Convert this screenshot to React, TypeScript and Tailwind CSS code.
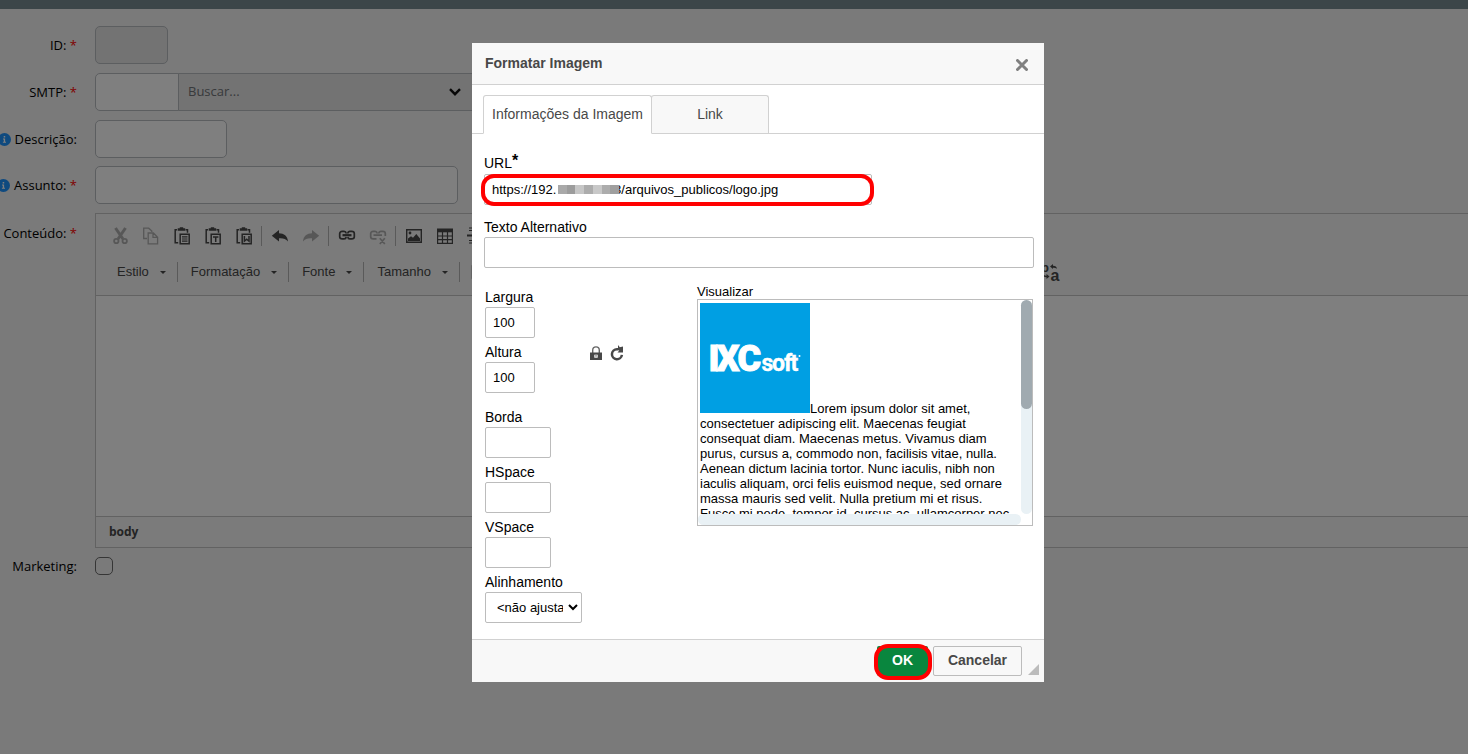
import React from "react";

const sans = "font-['Liberation_Sans',Arial,sans-serif]";
const box = "h-[31px] rounded-xs border border-[#bcbcbc] bg-white pl-[7px] text-[13px] text-black outline-none";

function InfoIcon() {
  return (
    <svg className="size-[13px] shrink-0" viewBox="0 0 13 13" aria-hidden="true">
      <circle cx="6.5" cy="6.5" r="6.5" fill="#1f94ff" />
      <path d="M5 5.4h2.1v3.3h.9v1.100H4.900V8.700h.9V6.400H5zM5.700 3h1.500v1.500H5.700z" fill="#fff" />
    </svg>
  );
}

function RowLabel({ text, htmlFor, required, info }: { text: string; htmlFor: string; required?: boolean; info?: boolean }) {
  return (
    <label htmlFor={htmlFor} className="flex w-[77px] shrink-0 items-center justify-end gap-1 text-[13px] leading-[18px] whitespace-nowrap text-black">
      {info && <InfoIcon />}
      <span>
        {text}
        {required && <span className="text-[#ff0000]"> *</span>}
      </span>
    </label>
  );
}

function ToolButton({ label, disabled, children }: { label: string; disabled?: boolean; children: React.ReactNode }) {
  return (
    <button type="button" aria-label={label} disabled={disabled} className="flex h-[30px] w-[31px] shrink-0 items-center justify-center text-[#484848] disabled:opacity-40">
      <svg className="size-[18px]" viewBox="0 0 18 18" fill="none" stroke="currentColor" strokeWidth="1.5">
        {children}
      </svg>
    </button>
  );
}

function Sep() {
  return <span className="mx-0.5 h-5 w-px shrink-0 bg-[#b4b4b4]" />;
}

function Combo({ label }: { label: string }) {
  return (
    <button type="button" className="flex h-[30px] shrink-0 items-center gap-[11px] pr-[9px] pl-[11px] text-[13px] text-[#484848]">
      {label}
      <svg className="h-[3px] w-[6px]" viewBox="0 0 6 3" aria-hidden="true">
        <path d="M0 0h6L3 3z" fill="currentColor" />
      </svg>
    </button>
  );
}

const clipboard = (
  <>
    <path d="M4 2.7H2.2v13h3M12.5 2.7h2v3" />
    <path d="M4.7 1.2h2.1V.3h3.4v.9h2v2.6H4.7z" fill="currentColor" stroke="none" />
    <path d="M7.2 7.2h9v9.6h-9z" />
  </>
);

function Editor() {
  return (
    <div className={`min-w-0 flex-1 overflow-hidden border border-r-0 border-[#c4c4c4] bg-white ${sans}`}>
      <div className="border-b border-[#c4c4c4] bg-[#f6f6f6] px-2 pt-[7px] pb-2">
        <div className="flex items-center">
          <ToolButton label="Recortar" disabled>
            <path d="M4.500 1 12 12M14.500 1 7 12" strokeWidth="3" />
            <circle cx="5.300" cy="14" r="2.200" strokeWidth="1.800" />
            <circle cx="13.700" cy="14" r="2.200" strokeWidth="1.800" />
          </ToolButton>
          <ToolButton label="Copiar" disabled>
            <path d="M5 11.500H1.700V1.200h5L9.800 4v1M6.200 6h5.200l4.200 4.200v6.600H6.200zM11 6v4.400h4.600" strokeWidth="1.300" />
          </ToolButton>
          <ToolButton label="Colar">
            {clipboard}
            <path d="M9 9.800h5.500M9 12h5.500M9 14.200h5.500" strokeWidth="1.200" />
          </ToolButton>
          <ToolButton label="Colar como texto">
            {clipboard}
            <path d="M9 10h5.400M11.700 10v5" />
          </ToolButton>
          <ToolButton label="Colar do Word">
            {clipboard}
            <path d="M9.400 9v5.200l2.300-2 2.300 2V9" />
          </ToolButton>
          <Sep />
          <ToolButton label="Desfazer">
            <path d="M.8 8.700 8 3v3.200c5 .2 8.500 2.500 9 8.200-2.200-3-5-3.400-9-3.200v3.300z" fill="currentColor" stroke="none" />
          </ToolButton>
          <ToolButton label="Refazer" disabled>
            <path d="M17.200 8.700 10 3v3.200c-5 .2-8.500 2.500-9 8.200 2.200-3 5-3.400 9-3.200v3.300z" fill="currentColor" stroke="none" />
          </ToolButton>
          <Sep />
          <ToolButton label="Link">
            <path d="M8.200 6.300C8 5 7.300 4.400 6 4.400H4.300C2.500 4.400 1.700 5.500 1.700 6.500v3.200c0 1.200.8 2.200 2.600 2.200H6c1.300 0 2-.6 2.200-1.900M9.800 6.300c.2-1.300.9-1.900 2.200-1.900h1.700c1.800 0 2.600 1.100 2.600 2.100v3.200c0 1.200-.8 2.200-2.600 2.200H12c-1.300 0-2-.6-2.200-1.900" strokeWidth="1.700" />
            <path d="M4.500 8.200h9" strokeWidth="2.200" />
          </ToolButton>
          <ToolButton label="Remover link" disabled>
            <path d="M8.200 6.300C8 5 7.300 4.400 6 4.400H4.300C2.500 4.400 1.700 5.500 1.700 6.500v3.200c0 1.200.8 2.200 2.600 2.200H7.500M9.800 6.300c.2-1.300.9-1.900 2.200-1.900h1.700c1.800 0 2.600 1.100 2.600 2.100v2.500M4.500 8.200h8.500M10.800 11.300l5 5.700M15.800 11.300l-5 5.700" strokeWidth="1.700" />
          </ToolButton>
          <Sep />
          <ToolButton label="Imagem">
            <path d="M1.700 2.700h14.600v12.600H1.700z" strokeWidth="1.400" />
            <circle cx="5" cy="6" r="1.400" fill="currentColor" stroke="none" />
            <path d="M3 14v-2.500l3-2.200 2 1.500L11.300 7l3.700 4.500V14z" fill="currentColor" stroke="none" />
          </ToolButton>
          <ToolButton label="Tabela">
            <path d="M1 1.500h16v3.800H1z" fill="currentColor" stroke="none" />
            <path d="M1.600 2v14.400h14.800V2M6.500 5v11.500M11.500 5v11.500M1.600 9h14.800M1.600 12.700h14.800" strokeWidth="1.200" />
          </ToolButton>
          <ToolButton label="Linha horizontal">
            <path d="M2 1h14M2 3.500h14M2 13.500h14M2 16h14" strokeWidth="1" />
            <path d="M0 8.500h18" strokeWidth="2" />
          </ToolButton>
        </div>
        <div className="mt-1.5 flex items-center pl-0.5">
          <Combo label="Estilo" />
          <Sep />
          <Combo label="Formatação" />
          <Sep />
          <Combo label="Fonte" />
          <Sep />
          <Combo label="Tamanho" />
          <Sep />
          <div className="flex w-[574px] shrink-0 items-center pl-0.5">
            <ToolButton label="Negrito">
              <path d="M2.500 3h12v12h-12z" />
            </ToolButton>
          </div>
          <button type="button" aria-label="Idioma" className="size-[30px] shrink-0 text-[#484848]">
            <svg className="size-[30px]" viewBox="0 0 30 30" aria-hidden="true">
              <text x="5" y="15" fontSize="13" fontWeight="700" fill="currentColor">b</text>
              <text x="14.500" y="24" fontSize="16" fontWeight="700" fill="currentColor">a</text>
              <path d="M14 9.500 17 7v1.700c2.500 0 3.700 1 4 3-1.300-.8-2.500-1-4-1V12zM13.500 19.500 10.500 17v1.700c-2.300 0-3.400-.8-4-2.700 0 3 1.500 4.300 4 4.300V22z" fill="currentColor" />
            </svg>
          </button>
        </div>
      </div>
      <div className="h-[220px]" />
      <div className="flex h-[31px] items-center border-t border-[#c4c4c4] bg-[#f6f6f6] pb-px pl-[13px] font-['Open_Sans',sans-serif] text-xs font-bold text-[#484848]">
        body
      </div>
    </div>
  );
}

function Background() {
  const field = "h-[38px] border border-[#b8bcc0] bg-white";
  return (
    <main className="min-h-screen bg-[#f4f4f4] font-['Open_Sans','Noto_Sans',sans-serif]">
      <div className="h-[9px] bg-[#788c92]" />
      <form className="pt-[17px]">
        <div className="flex flex-col gap-[9px]">
          <div className="flex items-center gap-[18px]">
            <RowLabel text="ID:" htmlFor="id" required />
            <input id="id" disabled className="h-[38px] w-[73px] rounded-[5px] border border-[#b8bcc0] bg-[#e6e6e6]" />
          </div>
          <div className="flex items-center gap-[18px]">
            <RowLabel text="SMTP:" htmlFor="smtp" required />
            <div className="flex">
              <input id="smtp" className={`${field} w-[84px] rounded-l-[5px]`} />
              <div className="relative -ml-px flex">
                <select aria-label="Buscar" className="h-[38px] w-[300px] appearance-none rounded-r-[5px] border border-[#b8bcc0] bg-[#e6e6e6] pr-8 pl-[9px] text-[13px] text-[#707478]">
                  <option>Buscar...</option>
                </select>
                <svg className="pointer-events-none absolute top-[15px] left-[271px] h-2 w-3" viewBox="0 0 12 8" aria-hidden="true">
                  <path d="M1 1.200l5 5 5-5" fill="none" stroke="#111" strokeWidth="2.400" />
                </svg>
              </div>
            </div>
          </div>
          <div className="flex items-center gap-[18px]">
            <RowLabel text="Descrição:" htmlFor="descricao" info />
            <input id="descricao" className={`${field} w-[132px] rounded-[5px]`} />
          </div>
        </div>
        <div className="flex flex-col gap-[9px] pt-2">
          <div className="flex items-center gap-[18px]">
            <RowLabel text="Assunto:" htmlFor="assunto" required info />
            <input id="assunto" className={`${field} w-[363px] rounded-[5px]`} />
          </div>
          <div className="flex items-start gap-[18px]">
            <div className="pt-[11px]">
              <RowLabel text="Conteúdo:" htmlFor="conteudo" required />
            </div>
            <Editor />
          </div>
          <div className="flex items-center gap-[18px]">
            <RowLabel text="Marketing:" htmlFor="marketing" />
            <input id="marketing" type="checkbox" className="size-[18px] appearance-none rounded-[5px] border border-[#6c6c6c]" />
          </div>
        </div>
      </form>
    </main>
  );
}

function Field({ id, label, value, width }: { id: string; label: string; value?: string; width: string }) {
  return (
    <div className="flex flex-col items-start gap-0.5">
      <label htmlFor={id} className="text-sm leading-4">{label}</label>
      <input id={id} defaultValue={value} className={`${box} ${width}`} />
    </div>
  );
}

function Logo() {
  return (
    <svg className="inline-block size-[110px] align-baseline" viewBox="0 0 110 110" role="img" aria-label="IXCsoft">
      <rect width="110" height="110" fill="#009fe3" />
      <g fill="#fff" stroke="#fff" fontFamily="Roboto, sans-serif">
        <text x="8.500 16.500 37.500" y="67.500" fontSize="36" strokeWidth="1" fontWeight="900">IXC</text>
        <text x="61.500 72 84 90.500" y="67.500" fontSize="23" strokeWidth=".4" fontWeight="700">soft</text>
        <circle cx="99.500" cy="53" r="1" strokeWidth="0" />
      </g>
    </svg>
  );
}

const mosaic = ["w-[9px] bg-[#a9a9a9]", "w-[8px] bg-[#9c9c9c]", "w-[9px] bg-[#c6c6c6]", "w-[9px] bg-[#acacac]", "w-[9px] bg-[#c8c8c8]", "w-[8px] bg-[#acacac]", "w-[9px] bg-[#9f9f9f]"];

function Dialog() {
  return (
    <section role="dialog" aria-label="Formatar Imagem" className={`w-[572px] max-w-full bg-white text-black ${sans}`}>
      <header className="flex h-[42px] items-center justify-between border-b border-[#d1d1d1] bg-[#f8f8f8] pr-4 pl-[13px]">
        <h1 className="pb-0.5 text-sm font-bold text-[#484848]">Formatar Imagem</h1>
        <button type="button" aria-label="Fechar" className="pt-0.5">
          <svg className="size-3" viewBox="0 0 12 12" aria-hidden="true">
            <path d="M1.500 1.500l9 9M10.500 1.500l-9 9" stroke="#808080" strokeWidth="3" strokeLinecap="round" />
          </svg>
        </button>
      </header>
      <div role="tablist" className="flex border-b border-[#d1d1d1] pt-[10px] pl-[11px] text-sm text-[#484848]">
        <button type="button" role="tab" aria-selected="true" className="-mb-px h-[39px] rounded-t-[3px] border border-[#d1d1d1] border-b-white bg-white px-2 pb-0.5">
          Informações da Imagem
        </button>
        <button type="button" role="tab" aria-selected="false" className="-ml-px h-[38px] min-w-[118px] rounded-t-[3px] border border-b-0 border-[#d1d1d1] bg-[#f8f8f8] px-2 pb-0.5">
          Link
        </button>
      </div>
      <div className="pt-5 pr-2.5 pb-4 pl-3">
        <label htmlFor="url" className="block h-5 text-sm leading-[18px]">
          URL<b className="align-text-top text-base leading-3">*</b>
        </label>
        <div className="relative w-[388px]">
          <input id="url" defaultValue="https://192.                8/arquivos_publicos/logo.jpg" className={`${box} w-full`} />
          <div className="absolute top-[11px] left-[74px] flex h-[9px]">
            {mosaic.map((c, i) => (
              <span key={i} className={c} />
            ))}
          </div>
          <div className="pointer-events-none absolute top-0 -right-0.5 -left-[3px] h-8 rounded-[13px] border-4 border-[#ff0000]" />
        </div>
        <div className="mt-[13px] flex flex-col">
          <label htmlFor="alt" className="h-[19px] text-sm leading-[18px]">Texto Alternativo</label>
          <input id="alt" className={`${box} w-full`} />
        </div>
        <div className="mt-[15px] flex px-px">
          <div className="flex w-[212px] shrink-0 items-start pt-1.5">
            <div className="flex w-[104px] flex-col gap-1.5">
              <Field id="largura" label="Largura" value="100" width="w-[50px]" />
              <Field id="altura" label="Altura" value="100" width="w-[50px]" />
              <div className="h-1" />
              <Field id="borda" label="Borda" width="w-[66px]" />
              <Field id="hspace" label="HSpace" width="w-[66px]" />
              <Field id="vspace" label="VSpace" width="w-[66px]" />
              <div className="flex flex-col items-start gap-0.5">
                <label htmlFor="alinhamento" className="text-sm leading-4">Alinhamento</label>
                <select id="alinhamento" className={`${box} w-[97px] pr-0.5`}>
                  <option>&lt;não ajustado&gt;</option>
                </select>
              </div>
            </div>
            <div className="flex gap-[7px] pt-14">
              <button type="button" aria-label="Bloquear proporções">
                <svg className="h-4 w-3.5" viewBox="0 0 14 16" aria-hidden="true">
                  <path d="M3.700 8V5.200a3.300 3.300 0 0 1 6.600 0V8" fill="none" stroke="#666" strokeWidth="1.400" />
                  <path d="M1 7.500h12V15H1z" fill="#484848" />
                  <path d="M5.300 9.700h3.400v3H5.300z" fill="#fff" />
                  <path d="M6.200 9.700h1.600v2H6.200z" fill="#999" />
                </svg>
              </button>
              <button type="button" aria-label="Restaurar tamanho">
                <svg className="h-4 w-3.5" viewBox="0 0 14 16" aria-hidden="true">
                  <path d="M11.900 9.800A5 5 0 1 1 7 4.200h1.500" fill="none" stroke="#484848" strokeWidth="2.500" />
                  <path d="M8 0l1.800 2.200L13 1.500V7.500H7.500L9.300 5.500 8 5z" fill="#484848" />
                </svg>
              </button>
            </div>
          </div>
          <div className="min-w-0 flex-1">
            <div className="h-4 text-[13px] leading-[18px]">Visualizar</div>
            <div className="grid h-[227px] grid-cols-[1fr_11px] grid-rows-[1fr_11px] border border-[#bcbcbc]">
              <div className="h-[214px] overflow-hidden px-0.5 pt-[3px] text-[13px] leading-[15px]">
                <Logo />
                Lorem ipsum dolor sit amet, consectetuer adipiscing elit. Maecenas feugiat consequat diam. Maecenas metus. Vivamus diam purus, cursus a, commodo non, facilisis vitae, nulla. Aenean dictum lacinia tortor. Nunc iaculis, nibh non iaculis aliquam, orci felis euismod neque, sed ornare massa mauris sed velit. Nulla pretium mi et risus. Fusce mi pede, tempor id, cursus ac, ullamcorper nec,
              </div>
              <div className="rounded-full bg-[#e9f1f5]">
                <div className="h-[109px] rounded-full bg-[#a0aab0]" />
              </div>
              <div className="rounded-full bg-[#e9f1f5]" />
            </div>
          </div>
        </div>
      </div>
      <footer className="flex items-center justify-end border-t border-[#d1d1d1] bg-[#f8f8f8] py-1.5 pr-[5px]">
        <div className="relative mr-[5px]">
          <button type="button" className="h-[30px] w-[51px] rounded-xs bg-[#09863e] pb-0.5 text-sm font-bold text-white">OK</button>
          <div className="pointer-events-none absolute -top-0.5 -right-1 -bottom-1 -left-[3px] rounded-[14px] border-4 border-[#ff0000]" />
        </div>
        <button type="button" className="h-[30px] w-[89px] rounded-xs border border-[#bcbcbc] bg-[#f8f8f8] pb-0.5 text-sm font-bold text-[#484848]">Cancelar</button>
        <svg className="ml-[5px] size-3 self-end" viewBox="0 0 12 12" aria-hidden="true">
          <path d="M12 0v11H1z" fill="#bcbcbc" />
        </svg>
      </footer>
    </section>
  );
}

export default function App() {
  return (
    <div className="relative min-h-screen overflow-hidden">
      <Background />
      <div className="absolute inset-0 flex items-start justify-center bg-black/50 pt-[43px] pl-12">
        <Dialog />
      </div>
    </div>
  );
}
